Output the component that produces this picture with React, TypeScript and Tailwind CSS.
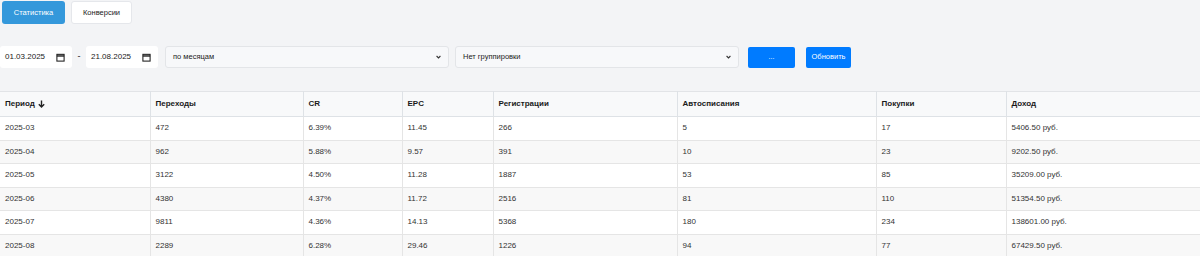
import React from 'react';

interface StatRow {
  period: string;
  clicks: number;
  cr: string;
  epc: string;
  regs: number;
  autopay: number;
  purchases: number;
  income: string;
}

const rows: StatRow[] = [
  { period: '2025-03', clicks: 472, cr: '6.39%', epc: '11.45', regs: 266, autopay: 5, purchases: 17, income: '5406.50 руб.' },
  { period: '2025-04', clicks: 962, cr: '5.88%', epc: '9.57', regs: 391, autopay: 10, purchases: 23, income: '9202.50 руб.' },
  { period: '2025-05', clicks: 3122, cr: '4.50%', epc: '11.28', regs: 1887, autopay: 53, purchases: 85, income: '35209.00 руб.' },
  { period: '2025-06', clicks: 4380, cr: '4.37%', epc: '11.72', regs: 2516, autopay: 81, purchases: 110, income: '51354.50 руб.' },
  { period: '2025-07', clicks: 9811, cr: '4.36%', epc: '14.13', regs: 5368, autopay: 180, purchases: 234, income: '138601.00 руб.' },
  { period: '2025-08', clicks: 2289, cr: '6.28%', epc: '29.46', regs: 1226, autopay: 94, purchases: 77, income: '67429.50 руб.' },
];

const columns = [
  { title: 'Период', width: 'w-[150px]' },
  { title: 'Переходы', width: 'w-[153px]' },
  { title: 'CR', width: 'w-[99px]' },
  { title: 'EPC', width: 'w-[91px]' },
  { title: 'Регистрации', width: 'w-[184px]' },
  { title: 'Автосписания', width: 'w-[199px]' },
  { title: 'Покупки', width: 'w-[130px]' },
  { title: 'Доход', width: 'w-[194px]' },
];

const CalendarIcon = () => (
  <svg width="9" height="9" viewBox="0 0 10 10" fill="none" stroke="#222" strokeWidth="1.2">
    <rect x="1" y="1.5" width="8" height="7.5" />
    <line x1="1" y1="3.3" x2="9" y2="3.3" strokeWidth="1.6" />
  </svg>
);

const Chevron = () => (
  <svg width="5" height="4" viewBox="0 0 6 4" fill="none" stroke="#333" strokeWidth="1.3">
    <path d="M0.7 0.8l2.3 2.3 2.3-2.3" />
  </svg>
);

const DateField = ({ value }: { value: string }) => (
  <div className="flex h-[22px] w-[72px] items-center justify-between rounded-[3px] bg-white pl-[5px] pr-[7px] text-[8px] text-[#222]">
    <span>{value}</span>
    <CalendarIcon />
  </div>
);

const SelectField = ({ value, width }: { value: string; width: string }) => (
  <div className={`flex h-[22px] ${width} items-center justify-between rounded-[3px] border border-[#e3e5e8] bg-[#f7f8fa] pl-[7px] pr-[7px] text-[7.5px] text-[#222]`}>
    <span>{value}</span>
    <Chevron />
  </div>
);

const App = () => {
  return (
    <div className="h-[256px] w-[1200px] overflow-hidden bg-[#f3f4f6] font-['Liberation_Sans',Arial,sans-serif] text-[#212529]">
      <div className="flex gap-[6px] pl-[2px] pt-[1px]">
        <button className="h-[23px] w-[63px] rounded-[3px] bg-[#3498db] text-[7.5px] text-white">Статистика</button>
        <button className="h-[23px] w-[61px] rounded-[3px] border border-[#e5e7eb] bg-white text-[7.5px] text-[#222]">Конверсии</button>
      </div>

      <div className="mt-[22px] flex items-center">
        <DateField value="01.03.2025" />
        <span className="w-[14px] text-center text-[9px] text-[#222]">-</span>
        <DateField value="21.08.2025" />
        <div className="ml-[7px]">
          <SelectField value="по месяцам" width="w-[284px]" />
        </div>
        <div className="ml-[6px]">
          <SelectField value="Нет группировки" width="w-[284px]" />
        </div>
        <button className="ml-[9px] h-[21px] w-[47px] rounded-[2px] bg-[#007bff] text-[7px] text-white">...</button>
        <button className="ml-[11px] h-[21px] w-[45px] rounded-[2px] bg-[#007bff] text-[7.5px] text-white">Обновить</button>
      </div>

      <table className="mt-[23px] w-[1200px] table-fixed border-collapse bg-white text-[8px]">
        <colgroup>
          {columns.map((c) => (
            <col key={c.title} className={c.width} />
          ))}
        </colgroup>
        <thead>
          <tr className="h-[25px] border-t border-[#e2e4e7] bg-[#f8f9fa]">
            {columns.map((c, i) => (
              <th
                key={c.title}
                className={`border-b border-[#dee2e6] px-[5px] text-left font-bold text-[#1a1a1a] ${i > 0 ? 'border-l' : ''}`}
              >
                <span className="inline-flex items-center gap-[3px]">
                  {c.title}
                  {i === 0 && (
                    <svg width="7" height="8" viewBox="0 0 7 8" fill="none" stroke="#222" strokeWidth="1.4">
                      <path d="M3.5 0.5v6.5M0.8 4.3l2.7 2.7 2.7-2.7" />
                    </svg>
                  )}
                </span>
              </th>
            ))}
          </tr>
        </thead>
        <tbody>
          {rows.map((r, idx) => {
            const cells = [r.period, r.clicks, r.cr, r.epc, r.regs, r.autopay, r.purchases, r.income];
            return (
              <tr key={r.period} className={`h-[23.5px] ${idx % 2 === 1 ? 'bg-[#f8f8f8]' : 'bg-white'}`}>
                {cells.map((v, i) => (
                  <td
                    key={i}
                    className={`border-b border-[#e5e5e5] px-[5px] text-[#333] ${i > 0 ? 'border-l' : ''}`}
                  >
                    {v}
                  </td>
                ))}
              </tr>
            );
          })}
        </tbody>
      </table>
    </div>
  );
};

export default App;
